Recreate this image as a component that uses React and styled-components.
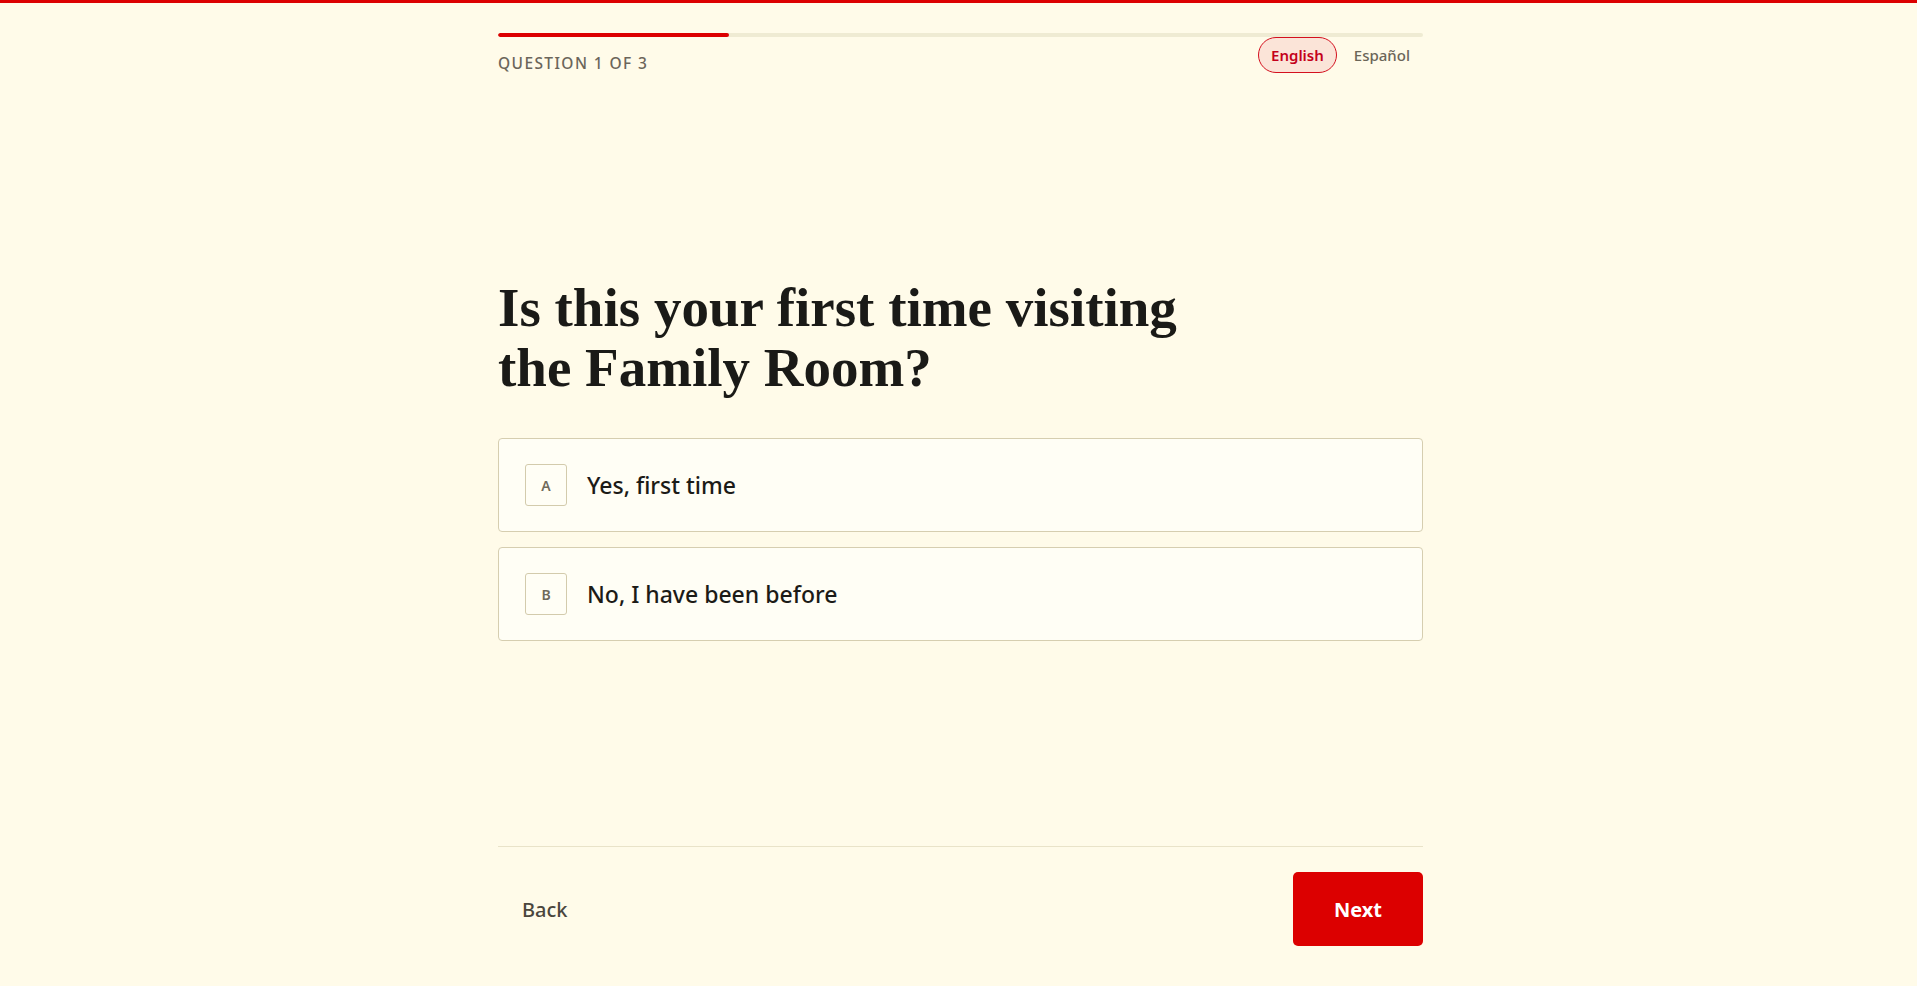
import React, { useState } from "react";
import styled, { createGlobalStyle } from "styled-components";

const GlobalStyle = createGlobalStyle`
  * { box-sizing: border-box; }
  html, body { margin: 0; padding: 0; }
  body {
    background: #fffbe9;
    font-family: "Noto Sans", "Open Sans", sans-serif;
    color: #1c1b17;
  }
`;

const Page = styled.div`
  min-height: 100vh;
  border-top: 3px solid #dc0000;
  padding-left: 4px;
  display: flex;
  justify-content: center;
`;

const Column = styled.div`
  width: 925px;
  display: flex;
  flex-direction: column;
`;

const Header = styled.header`
  padding-top: 30px;
`;

const Track = styled.div`
  height: 4px;
  border-radius: 2px;
  background: #efebd3;
  overflow: hidden;
`;

const Fill = styled.div`
  height: 100%;
  background: #dc0000;
  border-radius: 2px;
`;

const HeaderRow = styled.div`
  display: flex;
  justify-content: space-between;
  align-items: flex-start;
`;

const StepLabel = styled.div`
  padding-top: 16px;
  font-size: 15.5px;
  line-height: 20px;
  font-weight: 500;
  letter-spacing: 1.4px;
  text-transform: uppercase;
  color: #6b655a;
`;

const LangSwitch = styled.div`
  display: flex;
  gap: 4px;
`;

const LangButton = styled.button`
  height: 36px;
  padding: 0 12px;
  border-radius: 18px;
  border: 1px solid ${(p) => (p.$active ? "#d4101e" : "transparent")};
  background: ${(p) => (p.$active ? "#fbe4d8" : "transparent")};
  color: ${(p) => (p.$active ? "#c4001a" : "#6b6558")};
  font-family: inherit;
  font-size: 15px;
  font-weight: ${(p) => (p.$active ? 600 : 500)};
  cursor: pointer;
`;

const Main = styled.main`
  flex: 1;
  display: flex;
  flex-direction: column;
  justify-content: center;
`;

const Question = styled.h1`
  margin: 0 0 40px;
  max-width: 720px;
  font-family: "Liberation Serif", "Times New Roman", serif;
  font-size: 55px;
  line-height: 60px;
  font-weight: 700;
  color: #1a1a17;
`;

const Options = styled.div`
  display: flex;
  flex-direction: column;
  gap: 15px;
`;

const Option = styled.button`
  display: flex;
  align-items: center;
  gap: 20px;
  width: 100%;
  padding: 25px 26px;
  border: 1px solid ${(p) => (p.$selected ? "#dc0000" : "#d6ceb0")};
  border-radius: 4px;
  background: #fffef5;
  font-family: inherit;
  text-align: left;
  cursor: pointer;
`;

const Key = styled.span`
  flex: none;
  width: 42px;
  height: 42px;
  display: flex;
  align-items: center;
  justify-content: center;
  border: 1px solid #d3cbac;
  border-radius: 3px;
  font-size: 14px;
  font-weight: 600;
  color: #6f6a5c;
`;

const OptionText = styled.span`
  font-size: 23px;
  font-weight: 500;
  color: #1c1b17;
`;

const Footer = styled.footer`
  border-top: 1px solid #e9e3c9;
  padding: 25px 0 40px;
  display: flex;
  justify-content: space-between;
  align-items: center;
`;

const BackButton = styled.button`
  height: 74px;
  padding: 0 24px;
  border: none;
  background: transparent;
  font-family: inherit;
  font-size: 20px;
  font-weight: 500;
  color: #4a463d;
  cursor: pointer;
`;

const NextButton = styled.button`
  width: 130px;
  height: 74px;
  border: none;
  border-radius: 5px;
  background: #dc0000;
  color: #fff;
  font-family: inherit;
  font-size: 20px;
  font-weight: 700;
  cursor: pointer;
`;

const answers = [
  { key: "A", label: "Yes, first time" },
  { key: "B", label: "No, I have been before" },
];

export default function App() {
  const [lang, setLang] = useState("en");
  const [picked, setPicked] = useState(null);
  const step = 1;
  const total = 3;

  return (
    <>
      <GlobalStyle />
      <Page>
        <Column>
          <Header>
            <Track>
              <Fill style={{ width: "25%" }} />
            </Track>
            <HeaderRow>
              <StepLabel>
                Question {step} of {total}
              </StepLabel>
              <LangSwitch>
                <LangButton $active={lang === "en"} onClick={() => setLang("en")}>
                  English
                </LangButton>
                <LangButton $active={lang === "es"} onClick={() => setLang("es")}>
                  Español
                </LangButton>
              </LangSwitch>
            </HeaderRow>
          </Header>

          <Main>
            <Question>Is this your first time visiting the Family Room?</Question>
            <Options>
              {answers.map((a) => (
                <Option
                  key={a.key}
                  $selected={picked === a.key}
                  onClick={() => setPicked(a.key)}
                >
                  <Key>{a.key}</Key>
                  <OptionText>{a.label}</OptionText>
                </Option>
              ))}
            </Options>
          </Main>

          <Footer>
            <BackButton>Back</BackButton>
            <NextButton>Next</NextButton>
          </Footer>
        </Column>
      </Page>
    </>
  );
}
